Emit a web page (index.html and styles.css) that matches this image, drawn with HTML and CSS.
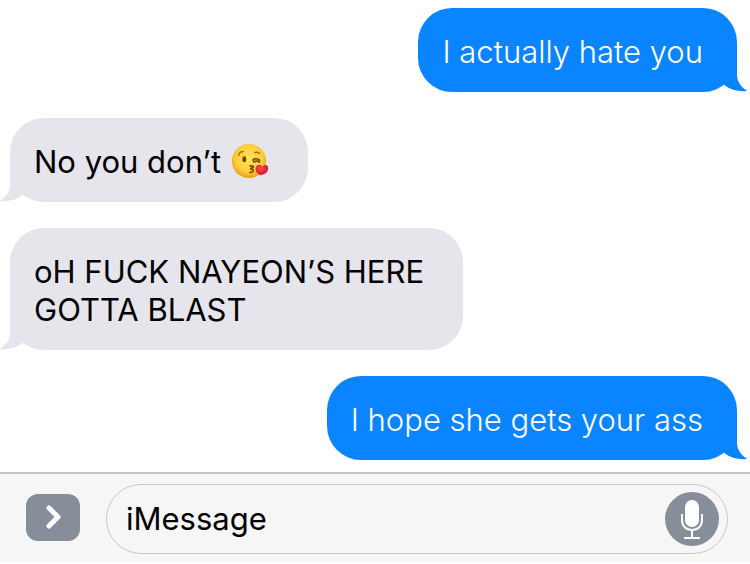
FILE: index.html
```
<!DOCTYPE html>
<html lang="en">
<head>
    <meta charset="UTF-8">
    <meta name="viewport" content="width=device-width, initial-scale=1">
    <title>Messages</title>
    <link rel="stylesheet" href="styles.css">
</head>
<body>
    <main class="messages">
        <div class="bubble sent">
            I actually hate you
            <svg class="tail" viewBox="0 0 24 34" aria-hidden="true"><path d="M14 0V16C14 23 17 28 24 33C16 34 8 32 1 27L0 0Z"/></svg>
        </div>
        <div class="bubble received">
            No you don’t
            <svg class="emoji" viewBox="0 0 40 40" role="img" aria-label="Face blowing a kiss">
                <defs>
                    <radialGradient id="face" cx="50%" cy="42%" r="55%">
                        <stop offset="0" stop-color="#ffe55a"/>
                        <stop offset="0.7" stop-color="#fdcf3c"/>
                        <stop offset="1" stop-color="#f0a31f"/>
                    </radialGradient>
                    <radialGradient id="heart" cx="40%" cy="35%" r="65%">
                        <stop offset="0" stop-color="#ff4a55"/>
                        <stop offset="1" stop-color="#d0142c"/>
                    </radialGradient>
                </defs>
                <circle cx="19" cy="19" r="18" fill="url(#face)"/>
                <g fill="none" stroke="#7c4a0c" stroke-linecap="round">
                    <path d="M8 13Q9 9 13 9M25 10Q28 9 30 11" stroke="#a86c14" stroke-width="1.6"/>
                    <path d="M23 18Q26 15 30 18M24 20Q27 18 30 20" stroke-width="1.8"/>
                    <path d="M20 24Q25 24 23 26Q22 27 20 27Q25 28 23 30Q22 31 20 31" stroke-width="1.8"/>
                </g>
                <ellipse cx="14" cy="17" rx="2" ry="3" fill="#70420d"/>
                <path d="M31 34C27 32 25 29 26 26C27 22 32 22 33 25C36 21 40 24 39 28C38 32 35 33 31 34Z" fill="url(#heart)"/>
            </svg>
            <svg class="tail" viewBox="0 0 24 34" aria-hidden="true"><path d="M14 0V16C14 23 17 28 24 33C16 34 8 32 1 27L0 0Z"/></svg>
        </div>
        <div class="bubble received">
            oH FUCK NAYEON’S HERE GOTTA BLAST
            <svg class="tail" viewBox="0 0 24 34" aria-hidden="true"><path d="M14 0V16C14 23 17 28 24 33C16 34 8 32 1 27L0 0Z"/></svg>
        </div>
        <div class="bubble sent">
            I hope she gets your ass
            <svg class="tail" viewBox="0 0 24 34" aria-hidden="true"><path d="M14 0V16C14 23 17 28 24 33C16 34 8 32 1 27L0 0Z"/></svg>
        </div>
    </main>

    <form class="composer">
        <button type="button" class="expand" aria-label="Show apps">
            <svg viewBox="0 0 16 26" aria-hidden="true"><path d="M4 4L13 13L4 22"/></svg>
        </button>
        <div class="field">
            <input type="text" class="message-input" aria-label="Message" value="iMessage">
            <button type="button" class="mic" aria-label="Record audio">
                <svg viewBox="0 0 54 54" aria-hidden="true">
                    <rect x="20" y="8" width="14" height="27" rx="7" fill="#fff"/>
                    <path d="M17 22V28C17 34 21 38 27 38C33 38 37 34 37 28V22M27 38V46M19 46H35" fill="none" stroke="#fff" stroke-width="2"/>
                </svg>
            </button>
        </div>
    </form>
</body>
</html>
```
FILE: styles.css
```
* {
    box-sizing: border-box;
}

body {
    margin: 0;
    min-height: 100vh;
    display: flex;
    flex-direction: column;
    padding-bottom: 2px;
    background: #fff;
    color: #000;
    font-family: Inter, "Liberation Sans", sans-serif;
    font-size: 31px;
    line-height: 38px;
}

/* Conversation */
.messages {
    flex: 1;
    display: flex;
    flex-direction: column;
    align-items: flex-start;
    gap: 26px;
    padding: 8px 13px 12px 10px;
}

.bubble {
    position: relative;
    max-width: 453px;
    padding: 25px 34px 21px 24px;
    border-radius: 34px;
}

.sent {
    align-self: flex-end;
    background: #0b84ff;
    color: #fff;
    font-weight: 300;
}

.received {
    padding-right: 38px;
    background: #e6e5eb;
}

.tail {
    position: absolute;
    right: -10px;
    bottom: 0;
    width: 24px;
    height: 34px;
    fill: #0b84ff;
}

.received .tail {
    right: auto;
    left: -10px;
    fill: #e6e5eb;
    transform: scaleX(-1);
}

.emoji {
    width: 40px;
    height: 38px;
    vertical-align: top;
}

/* Bottom bar */
.composer {
    display: flex;
    align-items: center;
    gap: 26px;
    padding: 10px 22px 8px 26px;
    border-top: 2px solid #c4c4c6;
    background: #f6f6f6;
}

button {
    display: flex;
    align-items: center;
    justify-content: center;
    flex-shrink: 0;
    padding: 0;
    border: none;
    background: #868e99;
    cursor: pointer;
}

.expand {
    width: 54px;
    height: 47px;
    margin-bottom: 4px;
    border-radius: 12px;
}

.expand svg {
    width: 16px;
    height: 26px;
    fill: none;
    stroke: #fff;
    stroke-width: 5;
    stroke-linecap: round;
    stroke-linejoin: round;
}

.field {
    flex: 1;
    display: flex;
    align-items: center;
    padding: 7px 8px 7px 19px;
    border: 1px solid #c8c8cc;
    border-radius: 36px;
}

.message-input {
    flex: 1;
    min-width: 0;
    padding: 0;
    border: none;
    outline: none;
    background: transparent;
    color: inherit;
    font: inherit;
}

.mic {
    width: 54px;
    height: 54px;
    border-radius: 50%;
}

.mic svg {
    width: 54px;
    height: 54px;
}
```
